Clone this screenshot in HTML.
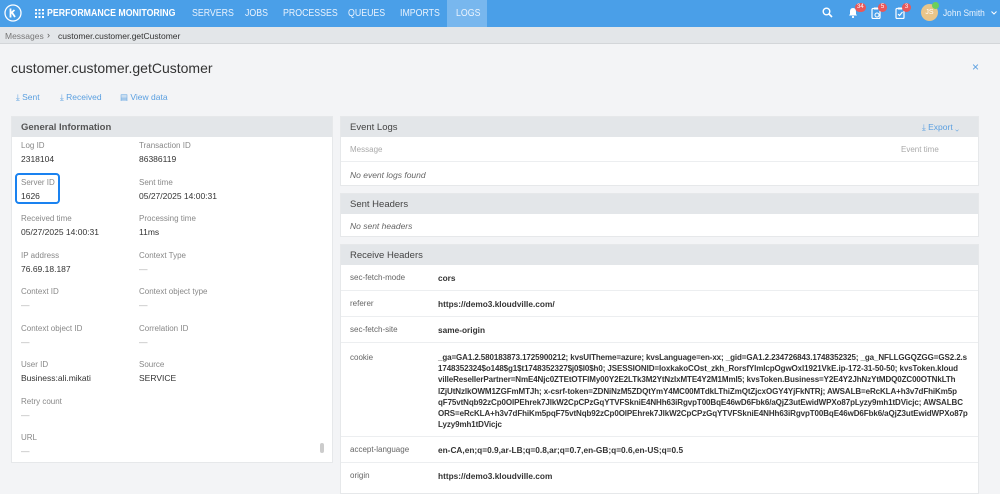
<!DOCTYPE html>
<html><head><meta charset="utf-8"><style>
*{box-sizing:border-box;margin:0;padding:0}
body{width:1000px;height:480px;overflow:hidden;background:#f3f4f6;font-family:"Liberation Sans",sans-serif;position:relative;color:#333}
.a{position:absolute;white-space:nowrap}
.nav{position:absolute;left:0;top:0;width:1000px;height:27px;background:#4a9fe8}
.nav .t{position:absolute;top:8px;color:#eaf3fd;font-size:10px;transform:scaleX(.88);transform-origin:left center;white-space:nowrap}
.crumb{position:absolute;top:27px;left:0;width:1000px;height:17px;background:#e3e6e9;border-bottom:1px solid #d3d6d9}
.panel{position:absolute;background:#fff;border:1px solid #e6e8ea}
.ph{position:absolute;left:0;right:0;top:0;height:19px;background:#e3e6e9;font-size:9.5px;color:#444;padding:5px 0 0 9px}
.lb{position:absolute;font-size:8px;color:#888;white-space:nowrap}
.vl{position:absolute;font-size:8.5px;color:#333;white-space:nowrap}
.row{position:absolute;left:0;right:0;border-top:1px solid #eceef0}
.hk{position:absolute;left:9px;font-size:8px;color:#666}
.hv{position:absolute;left:97px;font-size:8.3px;color:#333;font-weight:bold;white-space:nowrap}
.badge{position:absolute;top:3px;height:9px;min-width:9px;border-radius:5px;background:#e8585a;color:#fff;font-size:6px;text-align:center;line-height:9px;padding:0 2px}
</style></head><body>
<div class="nav">
<svg class="a" style="left:3px;top:3px" width="20" height="20" viewBox="0 0 20 20"><circle cx="10" cy="10" r="8" fill="none" stroke="#fff" stroke-width="1.3"/><path d="M7.5 5.5v9M7.5 10.5l4-3.5M9 9.5l3 4.5" stroke="#fff" stroke-width="1.8" fill="none"/></svg>
<svg class="a" style="left:35px;top:9px" width="9" height="9" viewBox="0 0 9 9" fill="#fff"><rect x="0" y="0" width="2" height="2"/><rect x="3.5" y="0" width="2" height="2"/><rect x="7" y="0" width="2" height="2"/><rect x="0" y="3.5" width="2" height="2"/><rect x="3.5" y="3.5" width="2" height="2"/><rect x="7" y="3.5" width="2" height="2"/><rect x="0" y="7" width="2" height="2"/><rect x="3.5" y="7" width="2" height="2"/><rect x="7" y="7" width="2" height="2"/></svg>
<div class="t" style="left:47px;font-weight:bold;color:#fff">PERFORMANCE MONITORING</div>
<div class="t" style="left:192px">SERVERS</div>
<div class="t" style="left:245px">JOBS</div>
<div class="t" style="left:283px">PROCESSES</div>
<div class="t" style="left:348px">QUEUES</div>
<div class="t" style="left:400px">IMPORTS</div>
<div class="a" style="left:447px;top:0;width:40px;height:27px;background:#78b7ee"></div>
<div class="t" style="left:456px">LOGS</div>
<svg class="a" style="left:822px;top:7px" width="11" height="11" viewBox="0 0 11 11"><circle cx="4.5" cy="4.5" r="3.3" fill="none" stroke="#fff" stroke-width="1.4"/><path d="M7 7l3 3" stroke="#fff" stroke-width="1.6"/></svg>
<svg class="a" style="left:848px;top:7px" width="10" height="11" viewBox="0 0 10 11"><path d="M5 1C2.5 1 2 3 2 5v2L1 8.5h8L8 7V5C8 3 7.5 1 5 1z" fill="#fff"/><circle cx="5" cy="10" r="1.1" fill="#fff"/></svg>
<div class="badge" style="left:855px">34</div>
<svg class="a" style="left:871px;top:7px" width="10" height="12" viewBox="0 0 10 12"><rect x="1" y="1.5" width="8" height="10" rx="1" fill="none" stroke="#fff" stroke-width="1.2"/><rect x="3" y="0.5" width="4" height="2" fill="#fff"/><circle cx="6" cy="8" r="2" fill="none" stroke="#fff"/></svg>
<div class="badge" style="left:878px">5</div>
<svg class="a" style="left:895px;top:7px" width="10" height="12" viewBox="0 0 10 12"><rect x="1" y="1.5" width="8" height="10" rx="1" fill="none" stroke="#fff" stroke-width="1.2"/><rect x="3" y="0.5" width="4" height="2" fill="#fff"/><path d="M3 7l1.5 1.5L7.5 5" stroke="#fff" fill="none" stroke-width="1.2"/></svg>
<div class="badge" style="left:902px">3</div>
<div class="a" style="left:921px;top:4px;width:17px;height:17px;border-radius:50%;background:#e8c58a;color:#fff;font-size:7px;text-align:center;line-height:17px">JS</div>
<div class="a" style="left:932px;top:2px;width:7px;height:7px;border-radius:50%;background:#6ccf5c"></div>
<div class="t" style="left:943px;font-size:9.5px;top:8px">John Smith</div>
<svg class="a" style="left:991px;top:11px" width="6" height="4" viewBox="0 0 6 4"><path d="M0.5 0.5l2.5 2.5 2.5-2.5" stroke="#fff" fill="none"/></svg>
</div>
<div class="crumb">
<div class="a" style="left:5px;top:4px;font-size:8.5px;color:#777">Messages</div>
<div class="a" style="left:47px;top:3px;font-size:9px;color:#555">›</div>
<div class="a" style="left:58px;top:4px;font-size:8.5px;color:#333">customer.customer.getCustomer</div>
</div>
<div class="a" style="left:11px;top:60px;font-size:14px;color:#333">customer.customer.getCustomer</div>
<div class="a" style="left:972px;top:60px;font-size:12px;color:#5a9fe0">×</div>
<div class="a" style="left:16px;top:92px;font-size:8.5px;color:#5a9fe0">⤓ Sent</div>
<div class="a" style="left:60px;top:92px;font-size:8.5px;color:#5a9fe0">⤓ Received</div>
<div class="a" style="left:120px;top:92px;font-size:8.5px;color:#5a9fe0">▤ View data</div>

<div class="panel" style="left:11px;top:116px;width:322px;height:347px">
<div class="ph" style="height:20px;font-weight:bold;color:#555">General Information</div>
<div class="lb" style="left:9px;top:24px">Log ID</div><div class="vl" style="left:9px;top:37px">2318104</div>
<div class="lb" style="left:127px;top:24px">Transaction ID</div><div class="vl" style="left:127px;top:37px">86386119</div>
<div class="a" style="left:3px;top:56px;width:45px;height:31px;border:2px solid #1a82f0;border-radius:4px"></div>
<div class="lb" style="left:9px;top:61px">Server ID</div><div class="vl" style="left:9px;top:74px">1626</div>
<div class="lb" style="left:127px;top:61px">Sent time</div><div class="vl" style="left:127px;top:74px">05/27/2025 14:00:31</div>
<div class="lb" style="left:9px;top:97px">Received time</div><div class="vl" style="left:9px;top:110px">05/27/2025 14:00:31</div>
<div class="lb" style="left:127px;top:97px">Processing time</div><div class="vl" style="left:127px;top:110px">11ms</div>
<div class="lb" style="left:9px;top:134px">IP address</div><div class="vl" style="left:9px;top:147px">76.69.18.187</div>
<div class="lb" style="left:127px;top:134px">Context Type</div><div class="vl" style="left:127px;top:147px;color:#aaa">—</div>
<div class="lb" style="left:9px;top:170px">Context ID</div><div class="vl" style="left:9px;top:183px;color:#aaa">—</div>
<div class="lb" style="left:127px;top:170px">Context object type</div><div class="vl" style="left:127px;top:183px;color:#aaa">—</div>
<div class="lb" style="left:9px;top:207px">Context object ID</div><div class="vl" style="left:9px;top:220px;color:#aaa">—</div>
<div class="lb" style="left:127px;top:207px">Correlation ID</div><div class="vl" style="left:127px;top:220px;color:#aaa">—</div>
<div class="lb" style="left:9px;top:243px">User ID</div><div class="vl" style="left:9px;top:256px">Business:ali.mikati</div>
<div class="lb" style="left:127px;top:243px">Source</div><div class="vl" style="left:127px;top:256px">SERVICE</div>
<div class="lb" style="left:9px;top:280px">Retry count</div><div class="vl" style="left:9px;top:293px;color:#aaa">—</div>
<div class="lb" style="left:9px;top:316px">URL</div><div class="vl" style="left:9px;top:329px;color:#aaa">—</div>
<div class="a" style="left:308px;top:326px;width:4px;height:10px;border-radius:2px;background:#ccc"></div>
</div>

<div class="panel" style="left:340px;top:116px;width:639px;height:70px">
<div class="ph" style="height:20px">Event Logs</div>
<div class="a" style="left:581px;top:5px;font-size:8.5px;color:#5a9fe0">⤓ Export ⌄</div>
<div class="a" style="left:9px;top:28px;font-size:8px;color:#aaa">Message</div>
<div class="a" style="left:560px;top:28px;font-size:8px;color:#aaa">Event time</div>
<div class="row" style="top:44px"></div>
<div class="a" style="left:9px;top:53px;font-size:8.5px;color:#666;font-style:italic">No event logs found</div>
</div>
<div class="panel" style="left:340px;top:193px;width:639px;height:44px">
<div class="ph" style="height:20px">Sent Headers</div>
<div class="a" style="left:9px;top:27px;font-size:8.5px;color:#666;font-style:italic">No sent headers</div>
</div>
<div class="panel" style="left:340px;top:244px;width:639px;height:250px">
<div class="ph" style="height:20px">Receive Headers</div>
<div class="hk" style="top:28px">sec-fetch-mode</div><div class="hv" style="top:28px">cors</div>
<div class="row" style="top:45px"></div>
<div class="hk" style="top:54px">referer</div><div class="hv" style="top:54px">https://demo3.kloudville.com/</div>
<div class="row" style="top:71px"></div>
<div class="hk" style="top:80px">sec-fetch-site</div><div class="hv" style="top:80px">same-origin</div>
<div class="row" style="top:97px"></div>
<div class="hk" style="top:108px">cookie</div>
<div class="hv" style="top:107px;line-height:11.2px;font-size:8px;letter-spacing:-0.1px">_ga=GA1.2.580183873.1725900212; kvsUITheme=azure; kvsLanguage=en-xx; _gid=GA1.2.234726843.1748352325; _ga_NFLLGGQZGG=GS2.2.s<br>1748352324$o148$g1$t1748352327$j0$l0$h0; JSESSIONID=IoxkakoCOst_zkh_RorsfYlmlcpOgwOxl1921VkE.ip-172-31-50-50; kvsToken.kloud<br>villeResellerPartner=NmE4Njc0ZTEtOTFlMy00Y2E2LTk3M2YtNzIxMTE4Y2M1MmI5; kvsToken.Business=Y2E4Y2JhNzYtMDQ0ZC00OTNkLTh<br>lZjUtNzlkOWM1ZGFmMTJh; x-csrf-token=ZDNiNzM5ZDQtYmY4MC00MTdkLThiZmQtZjcxOGY4YjFkNTRj; AWSALB=eRcKLA+h3v7dFhiKm5p<br>qF75vtNqb92zCp0OlPEhrek7JlkW2CpCPzGqYTVFSkniE4NHh63iRgvpT00BqE46wD6Fbk6/aQjZ3utEwidWPXo87pLyzy9mh1tDVicjc; AWSALBC<br>ORS=eRcKLA+h3v7dFhiKm5pqF75vtNqb92zCp0OlPEhrek7JlkW2CpCPzGqYTVFSkniE4NHh63iRgvpT00BqE46wD6Fbk6/aQjZ3utEwidWPXo87p<br>Lyzy9mh1tDVicjc</div>
<div class="row" style="top:191px"></div>
<div class="hk" style="top:200px">accept-language</div><div class="hv" style="top:200px">en-CA,en;q=0.9,ar-LB;q=0.8,ar;q=0.7,en-GB;q=0.6,en-US;q=0.5</div>
<div class="row" style="top:217px"></div>
<div class="hk" style="top:226px">origin</div><div class="hv" style="top:226px">https://demo3.kloudville.com</div>
</div>
</body></html>
